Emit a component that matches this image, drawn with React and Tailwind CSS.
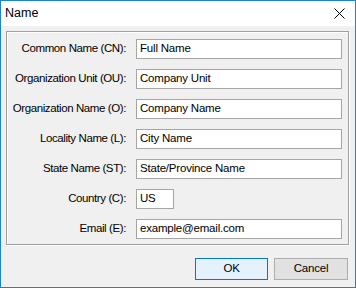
import React from 'react';

const fields = [
    { label: 'Common Name (CN):', value: 'Full Name' },
    { label: 'Organization Unit (OU):', value: 'Company Unit' },
    { label: 'Organization Name (O):', value: 'Company Name' },
    { label: 'Locality Name (L):', value: 'City Name' },
    { label: 'State Name (ST):', value: 'State/Province Name' },
    { label: 'Country (C):', value: 'US', short: true },
    { label: 'Email (E):', value: 'example@email.com' },
];

const App = () => {
    return (
        <div className="w-[356px] h-[288px] border border-[#1883d7] bg-[#f0f0f0] flex flex-col text-[11.5px] tracking-[-0.2px] text-black font-['Liberation_Sans',sans-serif]">
            {/* Title bar */}
            <div className="h-[25px] bg-white flex items-center justify-between pl-[4px] pr-[10px]">
                <span className="text-[12.5px] tracking-normal">Name</span>
                <svg width="11" height="11" viewBox="0 0 11 11">
                    <path d="M0.5 0.5 L10.5 10.5 M10.5 0.5 L0.5 10.5" stroke="#000" strokeWidth="1" />
                </svg>
            </div>

            {/* Group box */}
            <div className="mt-[5px] ml-[5px] mr-[6px] h-[214px] border border-[#a0a0a0] shadow-[inset_1px_1px_0_#fff,1px_1px_0_#fff] pt-[7px] flex flex-col gap-[10px]">
                {fields.map(f => (
                    <div key={f.label} className="flex items-center h-[20px]">
                        <label className="w-[120px] text-right pr-[1px] whitespace-nowrap tracking-[-0.4px]">{f.label}</label>
                        <div className={`ml-[9px] h-[20px] bg-white border border-[#a5a5a5] flex items-center px-[3px] ${f.short ? 'w-[38px]' : 'w-[206px]'}`}>
                            {f.value}
                        </div>
                    </div>
                ))}
            </div>

            {/* Buttons */}
            <div className="flex justify-end gap-[6px] mt-[13px] pr-[7px]">
                <button className="w-[73px] h-[22px] border border-[#0078d7] bg-[#e5f1fb]">OK</button>
                <button className="w-[74px] h-[22px] border border-[#adadad] bg-[#e1e1e1]">Cancel</button>
            </div>
        </div>
    );
};

export default App;
